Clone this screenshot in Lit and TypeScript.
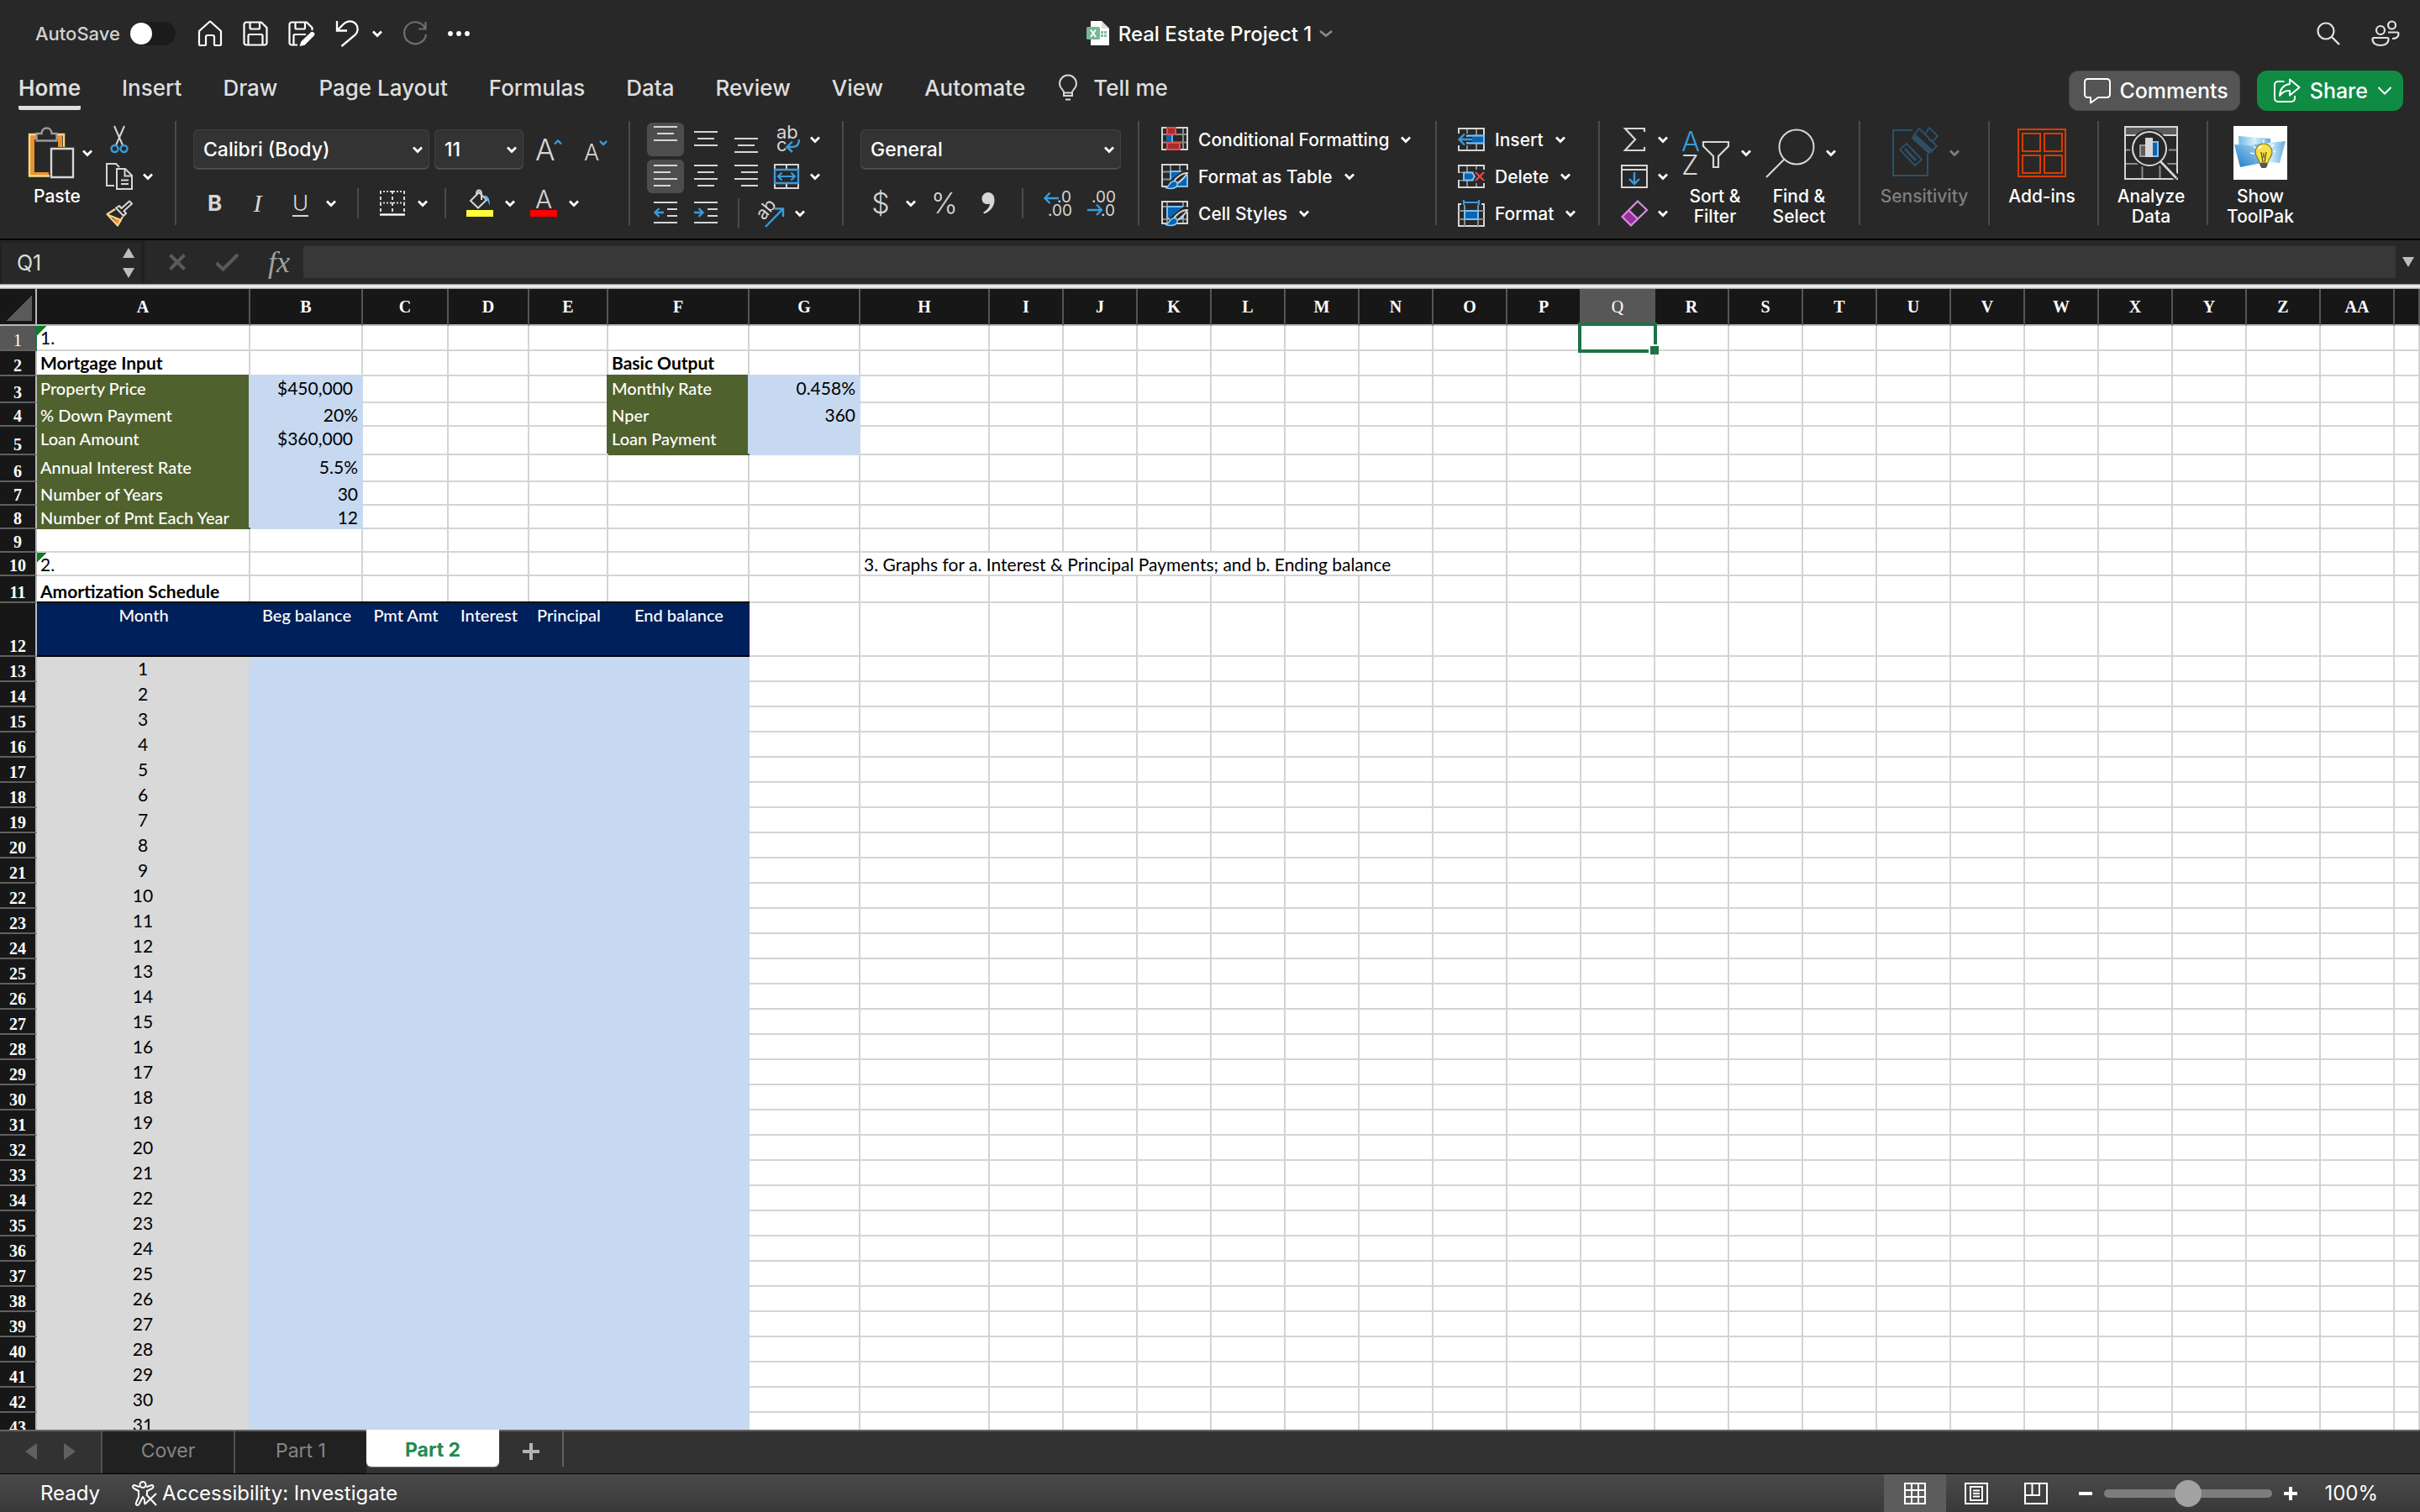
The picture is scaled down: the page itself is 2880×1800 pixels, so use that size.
import { LitElement, html, svg, css, nothing, TemplateResult } from "lit";
import { customElement } from "lit/decorators.js";
import { classMap } from "lit/directives/class-map.js";

const icon = (w: number, h: number, body: unknown) => html`<svg
  class="ic" width=${w} height=${h} viewBox="0 0 ${w} ${h}" fill="none" aria-hidden="true">${body}</svg>`;

const chev = (color = "#fff") =>
  icon(12, 8, svg`<path d="M1 1.5 6 6.5 11 1.5" stroke=${color} stroke-width="2.8"/>`);

const BLUE = "#3a9bdc";
const INK = "#d6d6d6";

/* ---------- title bar ---------- */
const homeIcon = icon(30, 32, svg`<path stroke="#fff" stroke-width="2.2" stroke-linejoin="round" d="M2 13 14.2 2a1.2 1.2 0 0 1 1.6 0L28 13v16a1 1 0 0 1-1 1h-6a1 1 0 0 1-1-1v-9a2 2 0 0 0-2-2h-6a2 2 0 0 0-2 2v9a1 1 0 0 1-1 1H3a1 1 0 0 1-1-1z"/>`);
const saveIcon = icon(30, 30, svg`<g stroke="#fff" stroke-width="2.2" stroke-linejoin="round"><path d="M4 1.5h18l6.5 6.5v18a2.5 2.5 0 0 1-2.5 2.5H4A2.5 2.5 0 0 1 1.5 26V4A2.5 2.5 0 0 1 4 1.5z"/><path d="M8.5 2v6A1.5 1.5 0 0 0 10 9.5h8.5A1.5 1.5 0 0 0 20 8V2M6.5 28V17.5A1.5 1.5 0 0 1 8 16h14a1.5 1.5 0 0 1 1.5 1.5V28"/></g>`);
const savePenIcon = icon(32, 30, svg`<g stroke="#fff" stroke-width="2.2" stroke-linejoin="round"><path d="M28.500 11V8L22 1.5H4A2.5 2.5 0 0 0 1.5 4v22A2.5 2.5 0 0 0 4 28.5h7"/><path d="M8.5 2v6A1.5 1.5 0 0 0 10 9.5h8.500A1.5 1.5 0 0 0 20 8V2M6.5 28V17.5A1.5 1.5 0 0 1 8 16h13"/></g><path d="M26.5 13.8a2.8 2.8 0 0 1 4 4L19.5 28.8l-6 1.2 1.8-5.4z" fill="#fff"/>`);
const undoIcon = icon(28, 32, svg`<path stroke="#fff" stroke-width="2.3" d="M2 1v11.5h12M2.5 12 10 4.500C14.5 0 21 .5 24.5 4.5c3.500 4.200 2.500 9.500-.8 13L7.500 31"/>`);
const redoIcon = icon(30, 32, svg`<path stroke="#6e6e6e" stroke-width="2.2" d="M27.5 2v8.500H19M27 10A13 13 0 1 0 28 17"/>`);
const dotsIcon = icon(26, 8, svg`<g fill="#fff"><circle cx="3" cy="4" r="2.9"/><circle cx="13" cy="4" r="2.9"/><circle cx="23" cy="4" r="2.9"/></g>`);
const docIcon = icon(28, 30, svg`<path d="M5 0h13l9 9v20H5z" fill="#fff"/><path d="M18 0v9h9z" fill="#dcdcdc"/><path d="M17 12h3v3h-3zm4 0h3v3h-3zm-4 4h3v3h-3zm4 0h3v3h-3z" fill="#7fbd9f"/><rect y="7" width="16" height="15" rx="1.5" fill="#74b894"/><path d="M5 10.5 11 19M11 10.5 5 19" stroke="#fff" stroke-width="2"/>`);
const searchIcon = icon(30, 30, svg`<circle cx="12" cy="12" r="9.5" stroke="#e2e2e2" stroke-width="2.2"/><path d="M19 19l9 9" stroke="#e2e2e2" stroke-width="2.4"/>`);
const peopleIcon = icon(34, 34, svg`<g stroke="#e2e2e2" stroke-width="2.2"><circle cx="11" cy="13" r="5"/><path d="M3 22h16a1.5 1.5 0 0 1 1.5 1.5c0 5-4 7.5-9.5 7.5s-9.5-2.5-9.5-7.5A1.5 1.5 0 0 1 3 22z"/><circle cx="24.5" cy="7" r="4.5"/><path d="M20 15.5h11a1.5 1.5 0 0 1 1.5 1.5c0 4-3 6-7.5 6"/></g>`);

/* ---------- tab row ---------- */
const bulbIcon = icon(24, 32, svg`<path stroke="${INK}" stroke-width="2" d="M7 25v-4.500c0-2-5-4.500-5-10a10 10 0 0 1 20 0c0 5.500-5 8-5 10V25zM7 21.500h10"/><path stroke="${INK}" stroke-width="2" d="M9 29.500h6"/>`);
const commentIcon = icon(32, 31, svg`<path stroke="#fff" stroke-width="2" stroke-linejoin="round" d="M4.5 1h23A3.5 3.5 0 0 1 31 4.5v15a3.5 3.5 0 0 1-3.5 3.5H17l-9 6.5V23H4.500A3.5 3.5 0 0 1 1 19.5v-15A3.5 3.5 0 0 1 4.5 1z"/>`);
const shareIcon = icon(32, 30, svg`<g stroke="#fff" stroke-width="2" stroke-linejoin="round"><path d="M12.5 4H5a4 4 0 0 0-4 4v16a4 4 0 0 0 4 4h16a4 4 0 0 0 4-4v-3"/><path d="M19 1.5 30.5 11 19 20.5v-5.500c-5-.5-9 1.500-12 6C7.500 13 11.500 8 19 7z"/></g>`);
const thinChev = icon(18, 12, svg`<path d="M1.5 2 9 9.500 16.500 2" stroke="#fff" stroke-width="2"/>`);

/* ---------- ribbon ---------- */
const pasteIcon = icon(54, 62, svg`<path d="M2 10h38v14h-5v-9H7v39h17v5H2z" fill="#e8922f"/><path d="M42 24V9H1v49.5h24" stroke="#fbd68b" stroke-width="2.4"/><path d="M9.5 16.5V8h6C15.500 4 18 1.5 21.500 1.5S27.500 4 27.500 8h6v8.500z" fill="#282828" stroke="#9b9b9b" stroke-width="2.4"/><path d="M27 26h26v34H27z" fill="#282828" stroke="${INK}" stroke-width="2.4"/>`);
const cutIcon = icon(32, 34, svg`<path d="M10 1 20.5 25M22 1 11.5 25" stroke="${INK}" stroke-width="2"/><circle cx="10.5" cy="28" r="4" stroke="${BLUE}" stroke-width="2.4"/><circle cx="21.5" cy="28" r="4" stroke="${BLUE}" stroke-width="2.4"/>`);
const copyIcon = icon(32, 32, svg`<g stroke="${INK}" stroke-width="2"><path d="M10 27H1V1h11l4 4"/><path d="M13 7h10l8 8v16H13z"/><path d="M22.5 7v8.500H31M18 20.5h9M18 25h9"/></g>`);
const brushIcon = icon(32, 32, svg`<path d="M3 19 14 8l12 12-6.5 4L14 30z" fill="#282828"/><path d="M8 21l11 4-5 5z" fill="#e8922f"/><path d="M11 11 1.5 17 14 30.5 20 20" stroke="#fbd68b" stroke-width="2.2" stroke-linejoin="round"/><path d="M3 18l15 6" stroke="#fbd68b" stroke-width="2"/><path d="M12 9.5 21 19l3-3-2.5-3L31 4.500 28 1.5 18.500 10 16 7z" stroke="${INK}" stroke-width="2" stroke-linejoin="round"/>`);
const growIcon = icon(32, 30, svg`<text class="g" x="-1" y="28" font-size="35" fill="${INK}">A</text><path d="M22 8.5 26 4.500 30 8.500" stroke="${BLUE}" stroke-width="2.4"/>`);
const shrinkIcon = icon(30, 30, svg`<text class="g" x="0" y="28" font-size="27" fill="${INK}">A</text><path d="M19 5 23 9 27 5" stroke="${BLUE}" stroke-width="2.4"/>`);
const borderIcon = icon(32, 32, svg`<path d="M1 2h30M1 15.5h30" stroke="${INK}" stroke-width="2" stroke-dasharray="2 2"/><path d="M2 1v26M16 1v26M30 1v26" stroke="${INK}" stroke-width="2" stroke-dasharray="4 3"/><path d="M1 29.5h30" stroke="#fff" stroke-width="2.4"/>`);
const fillIcon = icon(32, 34, svg`<rect y="25" width="32" height="8" fill="#ffff3c"/><path d="M5 14 15 4l9 9-10 9.500z" stroke="${INK}" stroke-width="2"/><path d="M12 6c0-6 6-6 6 0v7" stroke="${INK}" stroke-width="2"/><path d="M20 8c6-1 8 4 8 12-2-5-3-7-5-8z" fill="#6fb4ea"/>`);
const fontColorIcon = icon(32, 34, svg`<rect y="25" width="32" height="8" fill="#f00"/><text class="g" x="6" y="23" font-size="30" fill="${INK}">A</text>`);

const lines = (rows: [number, number, number][]) =>
  icon(28, 32, svg`<g stroke="${INK}" stroke-width="2">${rows.map(([y, a, b]) => svg`<path d="M${a} ${y}H${b}"/>`)}</g>`);
const alTop = lines([[1, 0, 28], [9, 4, 24], [17, 0, 28]]);
const alMid = lines([[7, 0, 28], [15, 4, 24], [23, 0, 28]]);
const alBot = lines([[15, 0, 28], [23, 4, 24], [31, 0, 28]]);
const alLeft = lines([[3, 0, 28], [11, 0, 20], [19, 0, 28], [27, 0, 20]]);
const alCenter = lines([[3, 0, 28], [11, 4, 24], [19, 0, 28], [27, 4, 24]]);
const alRight = lines([[3, 0, 28], [11, 8, 28], [19, 0, 28], [27, 8, 28]]);
const indent = (d: string) => icon(28, 32, svg`<path d="M0 3h28M16 11h12M16 19h12M0 27h28" stroke="${INK}" stroke-width="2"/><path d=${d} stroke="${BLUE}" stroke-width="2.4"/>`);
const outdentIcon = indent("M12 15H2M6.5 10 1.5 15 6.5 20");
const indentIcon = indent("M0 15h10M5.5 10 10.5 15 5.5 20");
const wrapIcon = icon(32, 34, svg`<text class="g r" x="4" y="16" font-size="22" fill="${INK}">ab</text><text class="g r" x="4" y="31" font-size="22" fill="${INK}">c</text><path d="M31 17c0 6-3 9-8 9h-6M23 19.5 16.5 26 23 32" stroke="${BLUE}" stroke-width="2.4"/>`);
const mergeIcon = icon(32, 32, svg`<path d="M2 2h28v28H2zM16 2v6M16 24v6" stroke="${INK}" stroke-width="2"/><path d="M2 8h28v16H2z" fill="#282828" stroke="${BLUE}" stroke-width="2.4"/><path d="M6 16h20M10.5 11.5 6 16l4.500 4.500M21.5 11.5 26 16l-4.500 4.500" stroke="${BLUE}" stroke-width="2.2"/>`);
const orientIcon = icon(34, 34, svg`<text class="g r" x="0" y="0" font-size="21" fill="${INK}" transform="translate(9 26) rotate(-50)">ab</text><path d="M11 33 31.5 12M22 11.5h10v9.500" stroke="${BLUE}" stroke-width="2.4"/>`);
const commaIcon = icon(16, 28, svg`<path d="M8 1c4.500 0 7.500 3.500 7.500 9 0 8-5 14-12.500 16.500l-.8-1.700C7 22 10 18 10 14.500 4.500 16.500.5 13 .5 8.500A7.500 7.500 0 0 1 8 1z" fill="${INK}"/>`);
const decInc = icon(32, 32, svg`<text class="g r" x="16" y="15" font-size="19" fill="${INK}">.0</text><text class="g r" x="5" y="31" font-size="19" fill="${INK}">.00</text><path d="M18 10H2M7.5 3.500 1.5 10l6 6" stroke="${BLUE}" stroke-width="2.4"/>`);
const decDec = icon(32, 32, svg`<text class="g r" x="5" y="15" font-size="19" fill="${INK}">.00</text><text class="g r" x="16" y="31" font-size="19" fill="${INK}">.0</text><path d="M0 24h17M11 17.5 17 24l-6 6" stroke="${BLUE}" stroke-width="2.4"/>`);

const gridLines = svg`<path d="M11 1v26M22 1v26M1 9.500h30M1 18.500h30" stroke="#8c8c8c" stroke-width="2"/><path d="M1 1h30v26H1z" stroke="${INK}" stroke-width="2"/>`;
const paintBrush = svg`<path d="M31 10 15 23l-2-2L28 9z" stroke="#282828" stroke-width="5"/><path d="M31 11c-1 3-8 10-13 13l-3-3c3-5 11-11 16-10z" fill="#282828" stroke="${INK}" stroke-width="2"/><path d="M17 21c3 1 3 5 0 7-3 2-9 2-12 0 3 0 4-2 5-4 2-3 5-4 7-3z" fill="#0a64b4" stroke="#8cc8f5" stroke-width="1.6"/>`;
const condIcon = icon(32, 30, svg`<path d="M7 1v26M26 1v26M1 9h30M1 18.5h30" stroke="#8c8c8c" stroke-width="2"/><path d="M1 1h30v26H1z" stroke="${INK}" stroke-width="2"/><path d="M7 1h10v8H7zM7 19h15v8H7z" fill="#ab2b2d" stroke="#d9504f" stroke-width="2"/><path d="M6 10h8v8H6z" fill="#0a64b4"/><path d="M13 10v8" stroke="#5fb0ea" stroke-width="2"/>`);
const tableIcon = icon(32, 30, svg`${gridLines}<path d="M11 9h20v18H11z" fill="#0a64b4" stroke="#7cc0f4" stroke-width="2"/>${paintBrush}`);
const stylesIcon = icon(32, 30, svg`<path d="M7 1v26M26 1v26M1 7h30M1 22h30" stroke="#8c8c8c" stroke-width="2"/><path d="M1 1h30v26H1z" stroke="${INK}" stroke-width="2"/><path d="M7 7h19v14H7z" fill="#0a64b4" stroke="#7cc0f4" stroke-width="2"/>${paintBrush}`);
const insIcon = icon(32, 28, svg`${gridLines}<path d="M0 7h20v14H0z" fill="#282828"/><path d="M11 9.5h20v9H11z" fill="#0a64b4" stroke="#7cc0f4" stroke-width="2"/><path d="M17 14H2M8 7.500 1.500 14 8 20.500" stroke="#282828" stroke-width="6"/><path d="M17 14H2M8 7.500 1.500 14 8 20.500" stroke="${BLUE}" stroke-width="2.4"/>`);
const delIcon = icon(32, 28, svg`${gridLines}<path d="M0 10h8v8H0zM19 6h13v16H19z" fill="#282828"/><path d="M7 9.500h10l3 4.500-3 4.500H7z" fill="#0a64b4" stroke="#7cc0f4" stroke-width="2"/><path d="M21 9l10 10M31 9 21 19" stroke="#e5484d" stroke-width="2.4"/>`);
const fmtIcon = icon(32, 32, svg`<path d="M4 5H1v26h30V5h-3" stroke="${INK}" stroke-width="2"/><path d="M8 6v25M24 6v25M1 13h30M1 23h30" stroke="#8c8c8c" stroke-width="2"/><path d="M8 13h16v10H8z" fill="#0a64b4" stroke="#7cc0f4" stroke-width="2"/><path d="M7 0v6M25 0v6M7 3h18" stroke="${BLUE}" stroke-width="2.2"/>`);
const sumIcon = icon(32, 30, svg`<path d="M28 6V2H5l12 13L5 28h23v-4" stroke="${INK}" stroke-width="2.2"/>`);
const downIcon = icon(32, 28, svg`<path d="M1 1h30v26H1zM1 6h30" stroke="${INK}" stroke-width="2"/><path d="M16 9v13.500M10 17l6 6 6-6" stroke="${BLUE}" stroke-width="2.4"/>`);
const eraseIcon = icon(32, 32, svg`<path d="M1.5 20 10 11.5 20 22l-8 8z" fill="#9a2f9f"/><path d="M20 1.5 31 12 12 30.5 1.5 20zM9.500 12.500 20 22.500" stroke="#d98be0" stroke-width="2.2"/>`);
const sortIcon = icon(56, 64, svg`<text class="g" x="-1" y="30" font-size="33" fill="${BLUE}">A</text><text class="g" x="-1" y="58" font-size="33" fill="${INK}">Z</text><path d="M25 19h30v5L43 36v13h-6V36L25 24z" stroke="${INK}" stroke-width="2.2"/>`);
const findIcon = icon(58, 64, svg`<circle cx="37" cy="25" r="20.5" stroke="${INK}" stroke-width="2"/><path d="M22.500 39.500 1 61" stroke="${INK}" stroke-width="2.2"/>`);
const sensIcon = icon(54, 64, svg`<g stroke="#2c5068" stroke-width="2"><path d="M24 5H1v54h41V33"/><path d="M17 21 35 40 27 47 9 28z"/><path d="M15 27l13 14" stroke-width="3"/><path d="M25 12 32 3 53 24 46 31z"/><path d="M25 12 46 31" stroke-width="7"/><path d="M39 10l5-8 10 10-6 6-5-2"/></g>`);
const addinsIcon = icon(58, 64, svg`<path d="M1 4h56v56H1zM6 9h21v21H6zM32 9h21v21H32zM6 35h21v21H6zM32 35h21v21H32z" stroke="#d83b01" stroke-width="2"/>`);
const analyzeIcon = icon(64, 64, svg`<path d="M1 1h62v9H1z" fill="#5c5c5c"/><path d="M1 28.5h62M1 45h62M21.5 45v18M42.5 45v18" stroke="#8c8c8c" stroke-width="2"/><path d="M1 1h62v62H1zM1 11h62" stroke="${INK}" stroke-width="2"/><circle cx="30" cy="27" r="23" fill="#282828"/><path d="M44 43 63 62" stroke="#282828" stroke-width="8"/><path d="M19 23h8v13h-8z" fill="#5c5c5c" stroke="#9b9b9b" stroke-width="2"/><path d="M33 19h7v17h-7z" fill="#0a64b4" stroke="#7cc0f4" stroke-width="2"/><path d="M25 14h9v23h-9z" fill="${INK}"/><circle cx="30" cy="27" r="20" stroke="${INK}" stroke-width="2"/><path d="M43 42 62 62" stroke="${INK}" stroke-width="2.6"/>`);
const toolpakIcon = icon(64, 64, svg`<defs><linearGradient id="b1" x1="0" y1="1" x2="1" y2="0"><stop offset="0" stop-color="#1c7cc4"/><stop offset="1" stop-color="#a9d8f5"/></linearGradient><linearGradient id="b2" x1="0" y1="0" x2="1" y2="0"><stop offset="0" stop-color="#6fb8e8"/><stop offset=".5" stop-color="#d9effb"/><stop offset="1" stop-color="#5fabdf"/></linearGradient></defs><path fill="#fff" d="M0 0h64v64H0z"/><path d="M6 12 44 15v12L7 30z" fill="url(#b2)"/><path d="M24 22 62 18 55 44 30 42z" fill="url(#b2)"/><path d="M1 22 30 24 34 44 8 49z" fill="url(#b1)"/><path d="M36 16v5M20 32l5 1M50 30l-3 1M24 24l3 3M48 22l-3 3" stroke="#fff" stroke-width="1.5"/><path d="M31 44c0-5-5-7-5-13a10 10 0 0 1 20 0c0 6-5 8-5 13z" fill="#f7e04a" stroke="#8a7a2a" stroke-width="1.2"/><path d="M30 27a6 6 0 0 1 4-3" stroke="#fff" stroke-width="2"/><path d="M33 31l2 12M39 31l-2 12M36 32v6" stroke="#4a4520" stroke-width="1.2"/><path d="M31.5 44h9v3l-2 3h-5l-2-3z" fill="#555"/>`);

/* ---------- status bar ---------- */
const a11yIcon = icon(30, 30, svg`<g stroke="#fff" stroke-width="2" stroke-linejoin="round"><circle cx="13" cy="4.5" r="3.5"/><path d="M17 7c2 0 5-2 7-2 2 .5 2 3 0 4l-6 3v4M9 7C7 7 4 5 2.500 5 .5 5.500.5 8 2.500 9L8 12v7l-3 7c-1 3 2 4 3.500 1.500L13 19l2 3v5"/><path d="M15 28 29 15M17 16l12 13"/></g>`);
const gridView = icon(26, 26, svg`<path d="M1 1h24v24H1zM9 1v24M17 1v24M1 9h24M1 17h24" stroke="#fff" stroke-width="2"/>`);
const pageView = icon(28, 26, svg`<path d="M1 1h26v24H1zM7 5h14v16H7zM10 9.5h8M10 13h8M10 16.5h8" stroke="#fff" stroke-width="2"/>`);
const breakView = icon(28, 26, svg`<path d="M1 1h26v24H1zM1 15h17V1M9.5 1v14" stroke="#fff" stroke-width="2"/>`);

/* ---------- sheet data ---------- */
const COLUMNS: [string, number][] = [
  ["A", 254], ["B", 134], ["C", 102], ["D", 96], ["E", 94], ["F", 168], ["G", 132], ["H", 154],
  ...["I", "J", "K", "L", "M", "N", "O", "P", "Q", "R", "S", "T", "U", "V", "W", "X", "Y", "Z", "AA"]
    .map((n): [string, number] => [n, 88]),
];
const ROW_HEIGHTS = [30, 30, 32, 28, 34, 32, 28, 28, 28, 28, 32, 64];
const ROW_COUNT = 43;

const CELLS: Record<string, string> = {
  A1: "1.", A2: "Mortgage Input", A3: "Property Price", A4: "% Down Payment", A5: "Loan Amount",
  A6: "Annual Interest Rate", A7: "Number of Years", A8: "Number of Pmt Each Year",
  B3: "$450,000", B4: "20%", B5: "$360,000", B6: "5.5%", B7: "30", B8: "12",
  F2: "Basic Output", F3: "Monthly Rate", F4: "Nper", F5: "Loan Payment", G3: "0.458%", G4: "360",
  A10: "2.", A11: "Amortization Schedule",
  H10: "3. Graphs for a. Interest & Principal Payments; and b. Ending balance",
  A12: "Month", B12: "Beg balance", C12: "Pmt Amt", D12: "Interest", E12: "Principal", F12: "End balance",
};

function cellStyle(col: string, row: number): Record<string, boolean> {
  const first = col === "A";
  const schedule = col.length === 1 && col <= "F";
  const inputs = row >= 3 && row <= 8;
  const outputs = row >= 3 && row <= 5;
  const value = (col === "B" && inputs) || (col === "G" && outputs);
  return {
    first,
    label: (first && inputs) || (col === "F" && outputs),
    input: value,
    money: value && (CELLS[col + row] ?? "").startsWith("$"),
    sched: schedule && !first && row > 12,
    head: schedule && row === 12,
    month: first && row > 12,
    bold: ["A2", "F2", "A11"].includes(col + row),
    low: row === 11,
    flag: first && (row === 1 || row === 10),
    active: col === "Q" && row === 1,
  };
}

@customElement("app-root")
export class AppRoot extends LitElement {
  static styles = css`
    :host { display: block; }
    * { box-sizing: border-box; }
    .app {
      display: flex; flex-direction: column; height: 100vh; overflow: hidden;
      background: #282828; color: #fff; font-family: Inter, "Liberation Sans", sans-serif; font-size: 21px;
    }
    .ic { display: block; flex: none; overflow: visible; }
    .g { font-family: Inter, "Liberation Sans", sans-serif; font-weight: 300; }
    .g.r { font-weight: 400; }
    button, input, select { font: inherit; color: inherit; margin: 0; padding: 0; border: 0; background: none; }
    button { display: flex; align-items: center; justify-content: center; }

    .title { display: grid; grid-template-columns: 1fr auto 1fr; align-items: center; height: 80px; margin-bottom: 4px; }
    .quick { display: flex; align-items: center; gap: 24px; padding-left: 42px; }
    .auto { display: flex; align-items: center; gap: 12px; margin-right: 2px; color: #d2d2d2; font-size: 22px; font-weight: 500; }
    .switch { appearance: none; width: 54px; height: 28px; border-radius: 14px; background: #1b1b1b; display: flex; align-items: center; }
    .switch::before { content: ""; width: 26px; height: 26px; border-radius: 50%; background: #fff; }
    .undo { display: flex; align-items: center; gap: 16px; }
    .name { display: flex; align-items: center; gap: 9px; font-size: 24px; font-weight: 500; }
    .name .ic { margin-right: 1px; }
    .corner-tools { display: flex; justify-content: flex-end; gap: 36px; padding-right: 24px; align-items: center; }

    .menu { display: flex; align-items: flex-start; justify-content: space-between; height: 52px; padding: 0 20px 0 22px; }
    .tabs { display: flex; gap: 49px; color: #dedede; font-size: 26px; font-weight: 500; line-height: 42px; }
    .tabs button { height: 47px; border-bottom: 5px solid transparent; border-radius: 2px; }
    .tabs .on { font-weight: 600; border-color: #dedede; }
    .tell { gap: 18px; margin-left: -10px; }
    .actions { display: flex; gap: 20px; font-size: 25px; font-weight: 500; }
    .actions button { height: 48px; border-radius: 12px; padding: 0 14px 0 18px; gap: 10px; background: #555; box-shadow: inset 0 0 0 1px #484848; }
    .actions .share { background: #0f8b44; box-shadow: none; gap: 11px; padding: 0 13px 0 20px; }

    .ribbon { display: flex; height: 150px; padding-top: 8px; border-bottom: 2px solid #000; }
    .group { display: flex; flex: none; height: 132px; }
    .bar { flex: none; width: 2px; height: 124px; background: #4b4b4b; }
    .col { display: flex; flex-direction: column; }
    .row { display: flex; align-items: center; }
    .cell { height: 44px; display: flex; align-items: center; gap: 12px; justify-content: flex-start; white-space: nowrap; font-weight: 500; }
    .big { flex-direction: column; justify-content: flex-start; padding-top: 6px; gap: 8px; line-height: 24px; font-weight: 500; }
    .big .pic { display: flex; align-items: center; gap: 14px; height: 64px; }
    .big .drop { padding-right: 4px; }
    .off { color: #7f7f7f; }
    .clip { padding: 0 26px 0 34px; gap: 16px; }
    .clip .pic { gap: 10px; }
    .clip .big .drop { padding-right: 8px; }
    .font { padding-left: 20px; width: 538px; flex-direction: column; }
    .r1 { height: 48px; margin: 10px 0 22px; gap: 6px; }
    .r2 { height: 36px; }
    .pick { display: grid; width: 281px; }
    .pick > * { grid-area: 1 / 1; }
    .pick .ic { align-self: center; justify-self: end; margin-right: 8px; pointer-events: none; }
    .pick select {
      appearance: none; width: 100%; height: 48px; padding: 0 12px; border-radius: 6px; background: #333;
      font-size: 23px; font-weight: 500; box-shadow: inset 0 0 0 1px #414141, inset 0 -2px 0 #555;
    }
    .size { width: 106px; }
    .general { width: 310px; }
    .grow { margin: 0 19px 0 9px; }
    .vs { width: 2px; height: 36px; background: #4b4b4b; margin: 0 24px 0 20px; }
    .t { width: 51px; font-size: 28px; line-height: 36px; color: #d6d6d6; }
    .t.b { font-weight: 700; font-size: 26px; }
    .t.i { font-family: "Liberation Serif", serif; font-style: italic; font-size: 30px; }
    .t.u { text-decoration: underline; text-underline-offset: 5px; font-weight: 300; font-size: 26px; }
    .mini { width: 22px; height: 36px; }
    .split { gap: 14px; margin-right: 18px; }
    .split.flush { margin-right: 0; }
    .align { flex-direction: column; padding: 2px 0 0 20px; width: 252px; gap: 4px; }
    .align .row { gap: 4px; height: 40px; }
    .al { width: 44px; height: 40px; border-radius: 6px; }
    .al.on { background: #4d4d4d; }
    .tail { gap: 12px; margin-left: 6px; }
    .align .vs { margin: 0 16px 0 12px; }
    .align .tail.o { margin-left: 0; }
    .number { padding: 0 20px; flex-direction: column; }
    .sym { font-size: 34px; font-weight: 300; color: #d6d6d6; line-height: 36px; }
    .w48 { width: 48px; }
    .w24 { width: 24px; }
    .w56 { width: 56px; }
    .number .vs { margin: 0 24px 0 16px; }
    .dec { gap: 20px; }
    .styles { padding-left: 26px; width: 352px; }
    .cells { padding-left: 25px; width: 192px; }
    .cell .ic + span { margin-right: 2px; }
    .edit { padding: 0 27px 0 25px; gap: 17px; }
    .sens { padding: 0 18px 0 22px; width: 152px; justify-content: center; }
    .solo { width: 128px; padding-right: 4px; justify-content: center; }

    .formula { display: flex; align-items: center; height: 52px; background: #282828; }
    .ref { display: flex; align-items: center; justify-content: space-between; width: 172px; height: 50px; padding: 0 8px 0 18px; border: 2px solid #202020; border-width: 2px 4px 0 2px; }
    .ref input { width: 100px; font-size: 25px; color: #dcdcdc; }
    .step { flex-direction: column; gap: 12px; }
    .fxs { display: flex; align-items: center; gap: 35px; padding: 0 16px 0 29px; }
    .fx { font-family: "Liberation Serif", serif; font-style: italic; font-size: 36px; line-height: 40px; color: #a0a0a0; }
    .entry { flex: 1; height: 38px; background: #383838; }
    .expand { width: 29px; height: 38px; }
    .strip { flex: none; height: 6px; background: linear-gradient(#8f8f8f, #f4f4f4 40%, #f4f4f4 60%, #9a9a9a); }

    .sheet { flex: 1; min-height: 0; overflow: hidden; background: #fff; }
    table { border-collapse: separate; border-spacing: 0; table-layout: fixed; width: 100%; }
    td, th { padding: 0; overflow: visible; white-space: nowrap; }
    thead th { height: 44px; background: #171717; border-right: 2px solid #555; border-bottom: 2px solid #b9b9b9; font: bold 20px/42px "Liberation Serif", serif; color: #fff; }
    thead .sel { background: #575757; border-right-color: #575757; box-shadow: -2px 0 0 #575757; font-weight: 400; }
    thead .all { background: linear-gradient(135deg, transparent 50%, #5a5a5a 50%) 8px 8px / 30px 30px no-repeat #171717; border-right-color: #b9b9b9; }
    tbody th { background: #171717; border-right: 2px solid #b9b9b9; border-bottom: 2px solid #606060; vertical-align: bottom; font: bold 20px/22px "Liberation Serif", serif; color: #fff; }
    tbody .sel { background: #575757; border-right-color: #1e7346; font-weight: 400; }
    td { border-right: 2px solid #d4d4d4; border-bottom: 2px solid #d4d4d4; vertical-align: top; padding: 3px 4px 0; color: #000; font: 21px/22px Lato, "Liberation Sans", sans-serif; }
    .bold { font-weight: 700; }
    .low { vertical-align: bottom; padding-bottom: 1px; }
    .label { background: #4f612d; border-color: #4f612d; box-shadow: -2px -2px 0 #4f612d; color: #fff; font-size: 20px; font-weight: 500; }
    .label.first { box-shadow: 0 -2px 0 #4f612d; }
    .input { background: #c6d9f0; border-color: #c6d9f0; box-shadow: -2px -2px 0 #c6d9f0; text-align: right; }
    .money { padding-right: 10px; }
    .head { background: #00205b; border-color: #00205b; border-bottom-color: #000; border-right-width: 0; box-shadow: 0 -2px 0 #000; color: #fff; text-align: center; font-size: 20px; font-weight: 500; }
    .month { background: #d9d9d9; border-color: #d9d9d9; text-align: center; }
    .sched { background: #c6d9f0; border-color: #c6d9f0; box-shadow: -2px 0 0 #c6d9f0; }
    .flag { background: linear-gradient(135deg, #0b8220 50%, transparent 50%) 0 0 / 12px 12px no-repeat; }
    .active { position: relative; }
    .ring { position: absolute; inset: -4px; border: 4px solid #1e7346; z-index: 1; }
    .grip { position: absolute; right: -6px; bottom: -6px; width: 10px; height: 10px; background: #1e7346; box-shadow: -2px -2px 0 #fff; }

    .books { flex: none; display: flex; height: 52px; border-top: 2px solid #666; background: #323232; color: #858585; font-size: 23px; }
    .nav { display: flex; gap: 32px; align-items: center; padding: 0 30px 3px 30px; }
    .book { width: 158px; height: 50px; padding-bottom: 4px; background: #212121; border-left: 2px solid #505050; }
    .book.on { height: 44px; margin-top: -2px; margin-right: 1px; padding: 4px 0 0; background: #fff; border: 0; border-radius: 0 0 6px 6px; color: #1f8b50; font-weight: 700; box-shadow: 0 1px 1px #777; }
    .add { width: 76px; height: 42px; border-right: 2px solid #606060; padding-top: 5px; }
    .status { flex: none; display: flex; align-items: center; justify-content: space-between; height: 46px; border-top: 1px solid #000; background: linear-gradient(#4a4a4a, #393939); font-size: 24px; }
    .left { display: flex; align-items: center; padding-left: 48px; gap: 38px; }
    .left button { gap: 6px; }
    .right { display: flex; align-items: center; height: 45px; }
    .view { width: 74px; height: 45px; }
    .view.on { background: #5c5c5c; }
    .view.p { width: 72px; }
    .view.q { width: 70px; }
    .zoom { display: flex; align-items: center; gap: 14px; padding: 0 50px 0 16px; }
    .zoom input { appearance: none; width: 200px; height: 32px; }
    .zoom input::-webkit-slider-runnable-track { height: 10px; border-radius: 5px; background: #7d7d7d; }
    .zoom input::-webkit-slider-thumb { appearance: none; width: 32px; height: 32px; margin-top: -11px; border-radius: 50%; background: #a2a2a2; }
    .pct { width: 82px; text-align: right; }
  `;

  private big(pic: TemplateResult, text: unknown, drop: string | null = "#fff") {
    return html`<button class="big ${drop && drop !== "#fff" ? "off" : ""}">
      <span class="pic">${pic}${drop ? chev(drop) : nothing}</span>
      <span class=${drop ? "drop" : ""}>${text}</span>
    </button>`;
  }

  private line(pic: TemplateResult, text?: string, drop = true, name = "") {
    return html`<button class="cell" aria-label=${text ?? name}>${pic}${text ? html`<span>${text}</span>` : nothing}${drop ? chev() : nothing}</button>`;
  }

  private al(pic: TemplateResult, name: string, on = false) {
    return html`<button class=${classMap({ al: true, on })} aria-label=${name}>${pic}</button>`;
  }

  private ribbon() {
    return html`<div class="ribbon">
      <div class="group clip">
        ${this.big(pasteIcon, "Paste")}
        <div class="col">
          ${this.line(cutIcon, undefined, false, "Cut")}${this.line(copyIcon, undefined, true, "Copy")}${this.line(brushIcon, undefined, false, "Format Painter")}
        </div>
      </div>
      <i class="bar"></i>
      <div class="group font">
        <div class="row r1">
          <div class="pick"><select aria-label="Font"><option>Calibri (Body)</option></select>${chev()}</div>
          <div class="pick size"><select aria-label="Font size"><option>11</option></select>${chev()}</div>
          <button class="grow" aria-label="Increase font size">${growIcon}</button>
          <button aria-label="Decrease font size">${shrinkIcon}</button>
        </div>
        <div class="row r2">
          <button class="t b">B</button><button class="t i">I</button><button class="t u">U</button>
          <button class="mini" aria-label="Underline options">${chev()}</button>
          <i class="vs"></i>
          <button class="split flush" aria-label="Borders">${borderIcon}${chev()}</button>
          <i class="vs"></i>
          <button class="split" aria-label="Fill color">${fillIcon}${chev()}</button>
          <button class="split flush" aria-label="Font color">${fontColorIcon}${chev()}</button>
        </div>
      </div>
      <i class="bar"></i>
      <div class="group align">
        <div class="row">
          ${this.al(alTop, "Top align", true)}${this.al(alMid, "Middle align")}${this.al(alBot, "Bottom align")}
          <button class="tail" aria-label="Wrap text">${wrapIcon}${chev()}</button>
        </div>
        <div class="row">
          ${this.al(alLeft, "Align left", true)}${this.al(alCenter, "Center")}${this.al(alRight, "Align right")}
          <button class="tail" aria-label="Merge and center">${mergeIcon}${chev()}</button>
        </div>
        <div class="row">
          ${this.al(outdentIcon, "Decrease indent")}${this.al(indentIcon, "Increase indent")}
          <i class="vs"></i>
          <button class="tail o" aria-label="Orientation">${orientIcon}${chev()}</button>
        </div>
      </div>
      <i class="bar"></i>
      <div class="group number">
        <div class="row r1">
          <div class="pick general"><select aria-label="Number format"><option>General</option></select>${chev()}</div>
        </div>
        <div class="row r2">
          <button class="w48" aria-label="Currency"><span class="sym">$</span></button>
          <button class="w24" aria-label="Currency options">${chev()}</button>
          <button class="w56" aria-label="Percent"><span class="sym">%</span></button>
          <button class="w48" aria-label="Comma style">${commaIcon}</button>
          <i class="vs"></i>
          <div class="row dec">
            <button aria-label="Increase decimal">${decInc}</button><button aria-label="Decrease decimal">${decDec}</button>
          </div>
        </div>
      </div>
      <i class="bar"></i>
      <div class="group styles"><div class="col">
        ${this.line(condIcon, "Conditional Formatting")}${this.line(tableIcon, "Format as Table")}${this.line(stylesIcon, "Cell Styles")}
      </div></div>
      <i class="bar"></i>
      <div class="group cells"><div class="col">
        ${this.line(insIcon, "Insert")}${this.line(delIcon, "Delete")}${this.line(fmtIcon, "Format")}
      </div></div>
      <i class="bar"></i>
      <div class="group edit">
        <div class="col">
          ${this.line(sumIcon, undefined, true, "AutoSum")}${this.line(downIcon, undefined, true, "Fill")}${this.line(eraseIcon, undefined, true, "Clear")}
        </div>
        ${this.big(sortIcon, html`Sort &amp;<br>Filter`)}
        ${this.big(findIcon, html`Find &amp;<br>Select`)}
      </div>
      <i class="bar"></i>
      <div class="group sens">${this.big(sensIcon, "Sensitivity", "#7f7f7f")}</div>
      <i class="bar"></i>
      <div class="group solo">${this.big(addinsIcon, "Add-ins", null)}</div>
      <i class="bar"></i>
      <div class="group solo">${this.big(analyzeIcon, html`Analyze<br>Data`, null)}</div>
      <i class="bar"></i>
      <div class="group solo">${this.big(toolpakIcon, html`Show<br>ToolPak`, null)}</div>
    </div>`;
  }

  private tableRow(row: number) {
    const height = ROW_HEIGHTS[row - 1] ?? 30;
    const cols = row === 10 ? COLUMNS.filter(([c]) => !["I", "J", "K", "L", "M", "N"].includes(c)) : COLUMNS;
    return html`<tr style="height:${height}px">
      <th scope="row" class=${row === 1 ? "sel" : ""}>${row}</th>
      ${cols.map(([col]) => {
        const text = col === "A" && row > 12 ? String(row - 12) : CELLS[col + row];
        const cls = cellStyle(col, row);
        return html`<td class=${classMap(cls)} colspan=${row === 10 && col === "H" ? 7 : 1}>${text ?? nothing}${cls.active
          ? html`<div class="ring"><div class="grip"></div></div>` : nothing}</td>`;
      })}
      <td></td>
    </tr>`;
  }

  private sheet() {
    return html`<div class="sheet"><table>
      <colgroup><col style="width:44px">${COLUMNS.map(([, w]) => html`<col style="width:${w}px">`)}<col></colgroup>
      <thead><tr><th class="all" aria-label="Select all"></th>
        ${COLUMNS.map(([c]) => html`<th scope="col" class=${c === "Q" ? "sel" : ""}>${c}</th>`)}<th></th></tr></thead>
      <tbody>${Array.from({ length: ROW_COUNT }, (_, i) => this.tableRow(i + 1))}</tbody>
    </table></div>`;
  }

  render() {
    const tri = (d: string, c: string, w: number, h: number) => icon(w, h, svg`<path d=${d} fill=${c}/>`);
    return html`<div class="app">
      <header class="title">
        <div class="quick">
          <label class="auto">AutoSave<input class="switch" type="checkbox" role="switch"></label>
          <button aria-label="Home">${homeIcon}</button>
          <button aria-label="Save">${saveIcon}</button>
          <button aria-label="Save as">${savePenIcon}</button>
          <button class="undo" aria-label="Undo">${undoIcon}${chev()}</button>
          <button aria-label="Redo">${redoIcon}</button>
          <button aria-label="More">${dotsIcon}</button>
        </div>
        <div class="name">${docIcon}<span>Real Estate Project 1</span>${icon(16, 10, svg`<path d="M1 2 8 7.5 15 2" stroke="#8a8a8a" stroke-width="2.6"/>`)}</div>
        <div class="corner-tools"><button aria-label="Search">${searchIcon}</button><button aria-label="People">${peopleIcon}</button></div>
      </header>
      <nav class="menu">
        <div class="tabs">
          ${["Home", "Insert", "Draw", "Page Layout", "Formulas", "Data", "Review", "View", "Automate"].map(
            (t, i) => html`<button class=${i === 0 ? "on" : ""}>${t}</button>`)}
          <button class="tell">${bulbIcon}Tell me</button>
        </div>
        <div class="actions">
          <button>${commentIcon}Comments</button>
          <button class="share">${shareIcon}Share${thinChev}</button>
        </div>
      </nav>
      ${this.ribbon()}
      <div class="formula">
        <div class="ref">
          <input aria-label="Name box" value="Q1">
          <button class="step" aria-label="Recent references">${tri("M7 0l7 12H0z", "#bdbdbd", 14, 12)}${tri("M0 0h14L7 12z", "#bdbdbd", 14, 12)}</button>
        </div>
        <div class="fxs">
          <button aria-label="Cancel">${icon(20, 20, svg`<path d="M1.5 1.5l17 17M18.5 1.5l-17 17" stroke="#5a5a5a" stroke-width="4"/>`)}</button>
          <button aria-label="Enter">${icon(28, 20, svg`<path d="M1.5 11 9.500 18.500 27 1" stroke="#5a5a5a" stroke-width="4"/>`)}</button>
          <button class="fx">fx</button>
        </div>
        <input class="entry" aria-label="Formula bar">
        <button class="expand" aria-label="Expand formula bar">${tri("M0 0h14L7 12z", "#bdbdbd", 14, 12)}</button>
      </div>
      <div class="strip"></div>
      ${this.sheet()}
      <div class="books">
        <div class="nav">
          <button aria-label="Previous sheet">${tri("M14 0v20L0 10z", "#606060", 14, 20)}</button>
          <button aria-label="Next sheet">${tri("M0 0v20l14-10z", "#606060", 14, 20)}</button>
        </div>
        <button class="book">Cover</button><button class="book">Part 1</button><button class="book on">Part 2</button>
        <button class="add" aria-label="Add sheet">${icon(20, 20, svg`<path d="M10 0v20M0 10h20" stroke="#b4b4b4" stroke-width="4"/>`)}</button>
      </div>
      <footer class="status">
        <div class="left"><span>Ready</span><button>${a11yIcon}<span>Accessibility: Investigate</span></button></div>
        <div class="right">
          <button class="view on" aria-label="Normal view">${gridView}</button>
          <button class="view p" aria-label="Page layout view">${pageView}</button>
          <button class="view q" aria-label="Page break preview">${breakView}</button>
          <div class="zoom">
            <button aria-label="Zoom out">${icon(16, 16, svg`<path d="M0 8h16" stroke="#fff" stroke-width="4"/>`)}</button>
            <input type="range" aria-label="Zoom" min="0" max="100" value="50">
            <button aria-label="Zoom in">${icon(16, 16, svg`<path d="M8 0v16M0 8h16" stroke="#fff" stroke-width="4"/>`)}</button>
            <span class="pct">100%</span>
          </div>
        </div>
      </footer>
    </div>`;
  }
}
